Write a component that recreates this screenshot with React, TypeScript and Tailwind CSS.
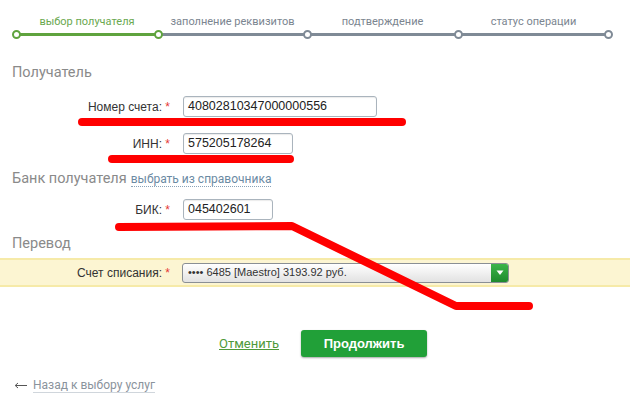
import React from "react";

const steps = [
  { label: "выбор получателя", w: "w-[142px]", active: true },
  { label: "заполнение реквизитов", w: "w-[149px]", active: false },
  { label: "подтверждение", w: "w-[151px]", active: false },
  { label: "статус операции", w: "w-[151px]", active: false },
];

function Field({ label, value, width }: { label: string; value: string; width: string }) {
  return (
    <div className="flex items-center h-[21px]">
      <div className="w-[183px] text-right text-[12px] text-[#333] pr-[13px]">
        {label} <span className="text-[#e53935]">*</span>
      </div>
      <div
        className={`${width} h-[21px] border border-[#aab4bd] rounded-[3px] bg-white px-[4px] flex items-center text-[12.5px] text-[#222] shadow-[inset_0_1px_1px_rgba(0,0,0,0.08)]`}
      >
        {value}
      </div>
    </div>
  );
}

export default function App() {
  return (
    <div className="relative w-[640px] h-[409px] bg-white overflow-hidden font-['Liberation_Sans',Arial,sans-serif]">
      {/* Steps */}
      <div className="flex pl-[16px] pt-[15px]">
        {steps.map((s, i) => (
          <div key={s.label} className={`${s.w} flex flex-col`}>
            <div
              className={`text-center text-[11px] leading-[14px] font-['Roboto',sans-serif] ${
                s.active ? "text-[#6aa84f]" : "text-[#7b8590]"
              }`}
            >
              {s.label}
            </div>
            <div className="relative mt-[1px] h-[9px] flex items-center">
              <div className={`w-full h-[3px] ${s.active ? "bg-[#5fa33e]" : "bg-[#7f8a96]"}`} />
              <div
                className={`absolute left-[-4px] top-0 w-[9px] h-[9px] rounded-full bg-white border-2 ${
                  i <= 1 ? "border-[#5fa33e]" : "border-[#7f8a96]"
                }`}
              />
              {i === steps.length - 1 && (
                <div className="absolute right-[-4px] top-0 w-[9px] h-[9px] rounded-full bg-white border-2 border-[#7f8a96]" />
              )}
            </div>
          </div>
        ))}
      </div>

      {/* Получатель */}
      <div className="mt-[25px] pl-[12px] text-[14.5px] leading-[18px] text-[#8a8a8a] font-['Roboto',sans-serif]">
        Получатель
      </div>
      <div className="mt-[14px] flex flex-col gap-[16px]">
        <Field label="Номер счета:" value="40802810347000000556" width="w-[194px]" />
        <Field label="ИНН:" value="575205178264" width="w-[110px]" />
      </div>

      {/* Банк получателя */}
      <div className="mt-[16px] pl-[12px] flex items-baseline gap-[4px] font-['Roboto',sans-serif]">
        <span className="text-[14.5px] leading-[18px] text-[#8a8a8a]">Банк получателя</span>
        <span className="text-[12px] text-[#6b8aa3] border-b border-dotted border-[#8aa3b8] leading-[13px]">
          выбрать из справочника
        </span>
      </div>
      <div className="mt-[11px]">
        <Field label="БИК:" value="045402601" width="w-[90px]" />
      </div>

      {/* Перевод */}
      <div className="mt-[15px] pl-[12px] text-[14.5px] leading-[18px] text-[#8a8a8a] font-['Roboto',sans-serif]">
        Перевод
      </div>
      <div className="mt-[5px] w-[630px] h-[29px] bg-[#fcf5d2] border-y-2 border-[#f6eaa8] flex items-center">
        <div className="w-[182px] text-right text-[12px] text-[#333] pr-[12px]">
          Счет списания: <span className="text-[#e53935]">*</span>
        </div>
        <div className="w-[327px] h-[20px] border border-[#8a8f94] rounded-[3px] bg-gradient-to-b from-white to-[#e2e2e2] flex items-center justify-between overflow-hidden">
          <span className="pl-[5px] text-[11px] text-[#333]">•••• 6485 [Maestro] 3193.92 руб.</span>
          <div className="w-[17px] h-full bg-gradient-to-b from-[#3cb54a] to-[#1d8a2c] flex items-center justify-center">
            <svg width="8" height="6" viewBox="0 0 8 6">
              <path d="M0.5 0.5 L7.5 0.5 L4 5 Z" fill="#fff" />
            </svg>
          </div>
        </div>
      </div>

      {/* Buttons */}
      <div className="mt-[43px] flex items-center pl-[219px] gap-[22px]">
        <span className="text-[13px] text-[#4f9a3a] underline font-['Roboto',sans-serif]">Отменить</span>
        <div className="w-[126px] h-[27px] rounded-[3px] bg-[#21a038] shadow-[0_1px_2px_rgba(0,0,0,0.35)] flex items-center justify-center text-white font-bold text-[13px]">
          Продолжить
        </div>
      </div>

      {/* Back */}
      <div className="mt-[21px] pl-[14px] flex items-center gap-[6px] text-[12px] text-[#8a939c] font-['Roboto',sans-serif]">
        <svg width="13" height="7" viewBox="0 0 13 7">
          <path d="M13 3.5 H1.5 M4 1 L1.2 3.5 L4 6" stroke="#555" strokeWidth="1" fill="none" />
        </svg>
        <span className="border-b border-[#d0d6dc] leading-[14px]">Назад к выбору услуг</span>
      </div>

      {/* red annotation strokes */}
      <svg className="absolute inset-0 pointer-events-none" width="640" height="409">
        <g stroke="#ff0000" strokeWidth="8" strokeLinecap="round" strokeLinejoin="round" fill="none">
          <path d="M82 122 L402 122" />
          <path d="M112 159 L290 159" />
          <path d="M119 227 L292 226 L456 306 L529 306" />
        </g>
      </svg>
    </div>
  );
}
